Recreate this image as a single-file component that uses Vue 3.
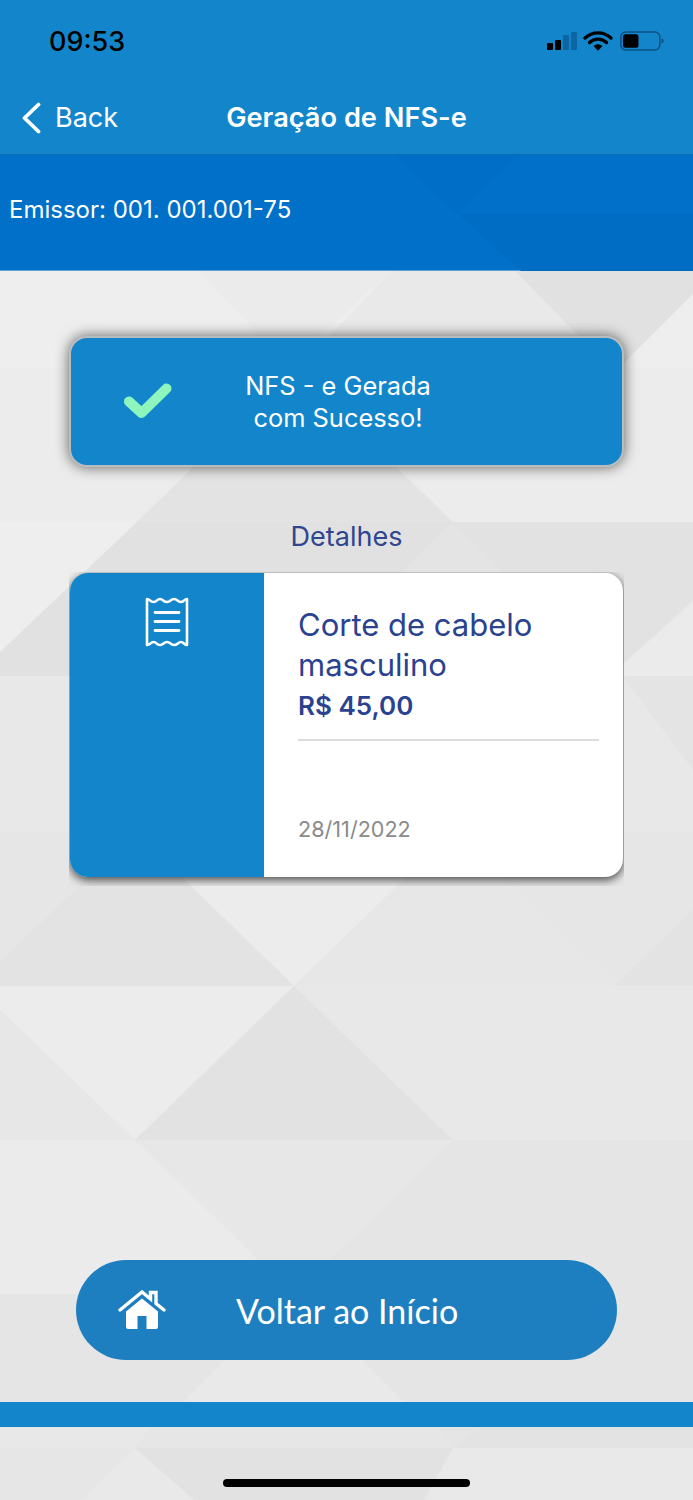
<template>
  <div class="screen">
    <!-- triangle texture behind everything -->
    <svg class="texture" width="693" height="1500" viewBox="0 0 693 1500">
      <rect width="693" height="1500" fill="#e8e8e8" />
      <polygon v-for="(tri, i) in shapes" :key="i" :points="tri.points" :fill="tri.fill" />
    </svg>

    <header class="app-header">
      <div class="status-bar">
        <span class="clock">09:53</span>
        <svg class="status-icons" width="120" height="22" viewBox="0 0 120 22">
          <rect x="1" y="12" width="6" height="7" rx="1" fill="#000" />
          <rect x="9" y="9" width="6" height="10" rx="1" fill="#000" />
          <rect x="17" y="4" width="6" height="15" rx="1" fill="#0d66a3" />
          <rect x="25" y="1" width="6" height="18" rx="1" fill="#0d66a3" />
          <path d="M39 7a19 19 0 0 1 26 0M43.500 11.500a12.500 12.500 0 0 1 17 0" fill="none" stroke="#000" stroke-width="3.400" stroke-linecap="round" />
          <path d="M47.500 15a7 7 0 0 1 9 0L52 19.800z" fill="#000" />
          <rect x="74.800" y="1" width="39" height="18" rx="5" fill="none" stroke="#0d5283" stroke-width="1.600" />
          <rect x="77" y="3.200" width="15.500" height="13.600" rx="2.500" fill="#000" />
          <path d="M115.500 7.500c1.800.4 2.200 1.400 2.200 2.500s-.4 2.100-2.200 2.500z" fill="#0d5283" />
        </svg>
      </div>
      <div class="nav-bar">
        <div class="back">
          <svg width="20" height="32" viewBox="0 0 20 32">
            <path d="M17.500 2.500 3.500 16l14 13.500" fill="none" stroke="#fff" stroke-width="3.800" stroke-linecap="round" stroke-linejoin="round" />
          </svg>
          <span>Back</span>
        </div>
        <h1 class="nav-title">Geração de NFS-e</h1>
      </div>
    </header>

    <div class="issuer">
      <svg class="issuer-shade" width="693" height="116" viewBox="0 0 693 116">
        <polygon points="393,0 521,0 457,58" fill="#006ec7" />
        <polygon points="457,58 693,58 693,116 521,116" fill="#006dc5" />
      </svg>
      <span class="issuer-text">Emissor: 001. 001.001-75</span>
    </div>

    <main class="content">
      <div class="success-banner">
        <svg class="check" width="50" height="40" viewBox="0 0 50 40">
          <path d="M6 19.500 18.500 31 43.500 6.500" fill="none" stroke="#8ef6bc" stroke-width="10" stroke-linejoin="round" stroke-linecap="round" />
        </svg>
        <p>NFS - e Gerada<br />com Sucesso!</p>
      </div>

      <h2 class="details-title">Detalhes</h2>

      <div class="card-clip">
        <div class="card">
          <div class="card-side">
            <svg width="44" height="50" viewBox="0 0 44 50">
              <path d="M2 2c3 0 3 3 6.500 3S12 2 15 2s3.500 3 7 3 3.500-3 7-3 3.500 3 7 3 3-3 6-3v46c-3 0-3-3-6-3s-3.500 3-7 3-3.500-3-7-3-3.500 3-7 3-3.500-3-6.500-3-3 3-6.500 3z" fill="none" stroke="#fff" stroke-width="2.600" stroke-linejoin="round" />
              <path d="M10 15.500h24M10 24.500h24M10 33.500h24" stroke="#fff" stroke-width="2.800" stroke-linecap="round" />
            </svg>
          </div>
          <div class="card-body">
            <div class="service-name">Corte de cabelo masculino</div>
            <div class="service-price">R$ 45,00</div>
            <div class="card-rule"></div>
            <div class="service-date">28/11/2022</div>
          </div>
        </div>
      </div>

      <button class="home-button">
        <svg width="48" height="40" viewBox="0 0 48 40">
          <path d="M2 20 24 2l8.500 7V2.500h5.500v11L46 20" fill="none" stroke="#fff" stroke-width="3.400" stroke-linecap="round" stroke-linejoin="miter" />
          <path d="M24 8.500 8 21.500V37a2 2 0 0 0 2 2h9.500V26h9v13H38a2 2 0 0 0 2-2V21.500z" fill="#fff" />
        </svg>
        <span>Voltar ao Início</span>
      </button>
    </main>

    <div class="bottom-bar"></div>
    <div class="home-zone"><div class="home-indicator"></div></div>
  </div>
</template>

<script setup>
const shapes = [
  { points: '0,271 693,271 693,368 0,368', fill: '#eeeeee' },
  { points: '199,271 391,271 336,322 275,368 247,322', fill: '#ebebeb' },
  { points: '391,271 515,271 610,368 300,368', fill: '#e9e9e9' },
  { points: '515,271 693,271 693,294 619,368 610,368', fill: '#e1e1e1' },
  { points: '0,368 693,368 693,522 0,522', fill: '#ececec' },
  { points: '294,368 453,522 137,522', fill: '#e3e3e3' },
  { points: '453,522 693,522 693,600 623,664 560,640', fill: '#e2e2e2' },
  { points: '0,522 137,522 60,600 0,652', fill: '#eeeeee' },
  { points: '137,522 453,522 300,676 0,676 0,652', fill: '#e1e1e1' },
  { points: '453,522 623,690 300,676', fill: '#e4e4e4' },
  { points: '0,676 693,676 693,832 0,832', fill: '#e8e8e8' },
  { points: '623,664 693,603 693,676 623,676', fill: '#ebebeb' },
  { points: '623,676 693,676 693,770', fill: '#e4e4e4' },
  { points: '0,832 693,832 693,986 0,986', fill: '#e6e6e6' },
  { points: '135,832 453,832 294,986', fill: '#ececec' },
  { points: '135,832 294,986 0,986 0,962', fill: '#e3e3e3' },
  { points: '453,832 620,986 294,986', fill: '#e7e7e7' },
  { points: '614,986 693,910 693,986', fill: '#e3e3e3' },
  { points: '0,986 294,986 135,1140 0,1010', fill: '#ececec' },
  { points: '294,986 453,1140 135,1140', fill: '#e2e2e2' },
  { points: '0,1010 135,1140 0,1140', fill: '#e7e7e7' },
  { points: '0,1140 135,1140 294,1294 0,1294', fill: '#ebebeb' },
  { points: '135,1140 453,1140 294,1294', fill: '#e7e7e7' },
  { points: '453,1140 693,1140 693,1294 294,1294', fill: '#e5e5e5' },
  { points: '0,1294 693,1294 693,1448 0,1448', fill: '#e5e5e5' },
  { points: '225,1360 362,1360 404,1402 183,1402', fill: '#e9e9e9' },
  { points: '152,1427 437,1427 453,1448 135,1448', fill: '#e6e6e6' },
  { points: '482,1427 693,1427 693,1448 453,1448', fill: '#e3e3e3' },
  { points: '0,1427 152,1427 135,1448 0,1448', fill: '#e8e8e8' },
  { points: '0,1448 693,1448 693,1500 0,1500', fill: '#e9e9e9' },
  { points: '135,1448 453,1448 424,1500 194,1500', fill: '#e2e2e2' },
  { points: '0,1448 135,1448 80,1500 0,1500', fill: '#e6e6e6' }
]
</script>

<style scoped>
.screen {
  position: relative;
  width: 693px;
  height: 1500px;
  overflow: hidden;
  display: flex;
  flex-direction: column;
  font-family: Inter, "Liberation Sans", sans-serif;
}

.texture {
  position: absolute;
  top: 0;
  left: 0;
}

.app-header {
  position: relative;
  height: 154px;
  background: #1386cb;
  border-bottom: 1px solid #0c6fb0;
  color: #fff;
}

.status-bar {
  height: 84px;
  display: flex;
  justify-content: space-between;
  align-items: flex-start;
  padding: 26px 27px 0 49px;
  box-sizing: border-box;
}

.clock {
  font-size: 27px;
  line-height: 32px;
  font-weight: 500;
  color: #000;
}

.status-icons {
  margin-top: 5px;
  margin-left: auto;
}

.nav-bar {
  position: relative;
  height: 66px;
  display: flex;
  align-items: center;
  justify-content: center;
}

.back {
  position: absolute;
  left: 21px;
  top: 17px;
  display: flex;
  align-items: center;
  gap: 14px;
  font-size: 27px;
}

.nav-title {
  margin: 0;
  font-size: 27.2px;
  font-weight: 600;
}

.issuer {
  position: relative;
  height: 116px;
  background: #0070c9;
  border-bottom: 1px solid #5d9fd8;
  box-sizing: border-box;
  display: flex;
  align-items: center;
  padding: 0 0 6px 9px;
  color: #fff;
  font-size: 24px;
}

.issuer-shade {
  position: absolute;
  top: 0;
  left: 0;
}

.issuer-text {
  position: relative;
}

.content {
  position: relative;
  flex: 1;
  display: flex;
  flex-direction: column;
  align-items: center;
}

.success-banner {
  margin-top: 65px;
  width: 555px;
  height: 131px;
  box-sizing: border-box;
  border: 2px solid #b9bcbf;
  border-radius: 18px;
  background: #1386cb;
  box-shadow: 0 0 14px rgba(0, 0, 0, 0.6);
  display: flex;
  align-items: center;
  padding-left: 52px;
  color: #fff;
}

.check {
  flex: none;
}

.success-banner p {
  margin: 0 0 0 15px;
  width: 300px;
  text-align: center;
  font-size: 25.4px;
  line-height: 32px;
}

.details-title {
  margin: 52px 0 0;
  height: 36px;
  font-size: 27px;
  line-height: 36px;
  font-weight: 400;
  color: #2f4590;
}

.card-clip {
  margin-top: 17px;
  width: 555px;
  height: 314px;
  overflow: hidden;
  box-sizing: border-box;
  padding: 1px 1px 0;
}

.card {
  height: 304px;
  display: flex;
  border-radius: 18px;
  background: #fff;
  box-shadow: 0 3px 10px rgba(0, 0, 0, 0.7);
  overflow: hidden;
}

.card-side {
  flex: none;
  width: 194px;
  background: #1386cb;
  display: flex;
  justify-content: center;
  padding-top: 24px;
  box-sizing: border-box;
}

.card-body {
  flex: 1;
  padding: 32px 24px 0 34px;
  display: flex;
  flex-direction: column;
}

.service-name {
  font-size: 31px;
  line-height: 40px;
  color: #2a4290;
}

.service-price {
  margin-top: 1px;
  font-size: 26px;
  line-height: 40px;
  font-weight: 600;
  color: #2a4290;
}

.card-rule {
  margin-top: 13px;
  height: 2px;
  background: #dcdcdc;
}

.service-date {
  margin-top: 74px;
  font-size: 21.6px;
  line-height: 28px;
  color: #8a8a8a;
}

.home-button {
  margin-top: auto;
  margin-bottom: 42px;
  width: 541px;
  height: 100px;
  border: none;
  border-radius: 50px;
  background: #1e7fc0;
  display: flex;
  align-items: center;
  padding: 0 0 0 42px;
  color: #fff;
  font-family: Lato, "Liberation Sans", sans-serif;
  font-size: 34px;
}

.home-button span {
  margin-left: 70px;
}

.bottom-bar {
  position: relative;
  height: 25px;
  background: #1386cb;
}

.home-zone {
  position: relative;
  height: 73px;
  display: flex;
  justify-content: center;
  align-items: flex-end;
  padding-bottom: 13px;
  box-sizing: border-box;
}

.home-indicator {
  width: 247px;
  height: 8px;
  border-radius: 4px;
  background: #000;
}
</style>
